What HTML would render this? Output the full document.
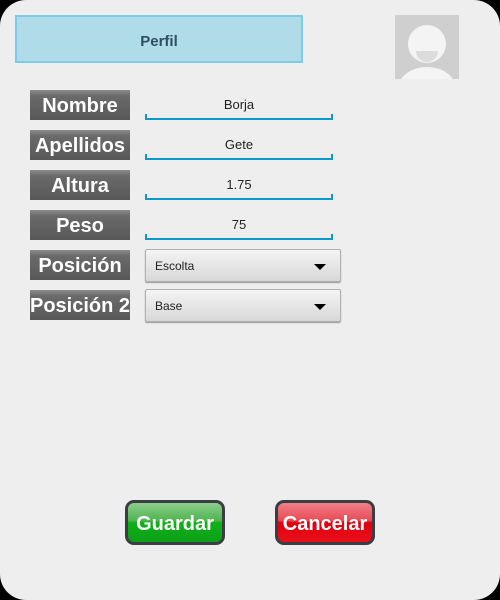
<!DOCTYPE html>
<html><head><style>
html,body{margin:0;padding:0;background:#000;}
#w{position:relative;width:500px;height:600px;background:#eeeeee;border-radius:26px;overflow:hidden;font-family:"Liberation Sans",sans-serif;}
.a{position:absolute;}
#perfil{left:15px;top:15px;width:284px;height:44px;background:#b0dcea;border:2px solid #7ccbe9;color:#2d4f62;font-weight:bold;font-size:15px;text-align:center;line-height:49px;}
#av{left:395px;top:15px;width:64px;height:64px;background:#cfcfcf;overflow:hidden;}
.lab{left:30px;width:100px;height:30px;background:linear-gradient(#8c8c8c,#6a6a6a 20%,#585858);color:#fff;font-weight:bold;font-size:20px;text-align:center;line-height:32px;white-space:nowrap;}
.inp{left:145px;width:188px;height:28px;font-size:13px;color:#222;text-align:center;line-height:30px;}
.inp:after{content:"";position:absolute;left:0;right:0;bottom:-2px;height:4px;border:2px solid #0a9acb;border-top:none;}
.cb{left:145px;width:194px;height:31px;border:1px solid #b0b0b0;border-radius:2px;background:linear-gradient(#f4f4f4,#d8d8d8);box-shadow:0 1px 1px #999;font-size:12px;color:#222;line-height:33px;}
.cb span{margin-left:9px;}
.cb i{position:absolute;right:14px;top:14px;width:0;height:0;border-left:6px solid transparent;border-right:6px solid transparent;border-top:6px solid #000;}
.btn{top:500px;width:94px;height:39px;border:3px solid #3a3d44;border-radius:9px;color:#fff;font-weight:bold;font-size:20px;text-align:center;line-height:42px;}
</style></head><body><div id="w">
<div id="perfil" class="a">Perfil</div>
<div id="av" class="a">
<div class="a" style="left:13px;top:10px;width:38px;height:38px;border-radius:50%;background:#f4f4f4"></div>
<div class="a" style="left:21px;top:36px;width:22px;height:11px;border-radius:0 0 11px 11px;background:#dcdcdc"></div>
<div class="a" style="left:4px;top:52px;width:56px;height:40px;border-radius:50%;background:#f4f4f4"></div>
</div>
<div class="a lab" style="top:90px">Nombre</div>
<div class="a lab" style="top:130px">Apellidos</div>
<div class="a lab" style="top:170px">Altura</div>
<div class="a lab" style="top:210px">Peso</div>
<div class="a lab" style="top:250px">Posición</div>
<div class="a lab" style="top:290px">Posición 2</div>
<div class="a inp" style="top:90px">Borja</div>
<div class="a inp" style="top:130px">Gete</div>
<div class="a inp" style="top:170px">1.75</div>
<div class="a inp" style="top:210px">75</div>
<div class="a cb" style="top:249px"><span>Escolta</span><i></i></div>
<div class="a cb" style="top:289px"><span>Base</span><i></i></div>
<div class="a btn" style="left:125px;background:linear-gradient(#8ccd8c,#4fb54f 45%,#10b01a 50%,#0ca018)">Guardar</div>
<div class="a btn" style="left:275px;background:linear-gradient(#f0808a,#e84a55 45%,#e0000e 50%,#e8101a)">Cancelar</div>
</div></body></html>
